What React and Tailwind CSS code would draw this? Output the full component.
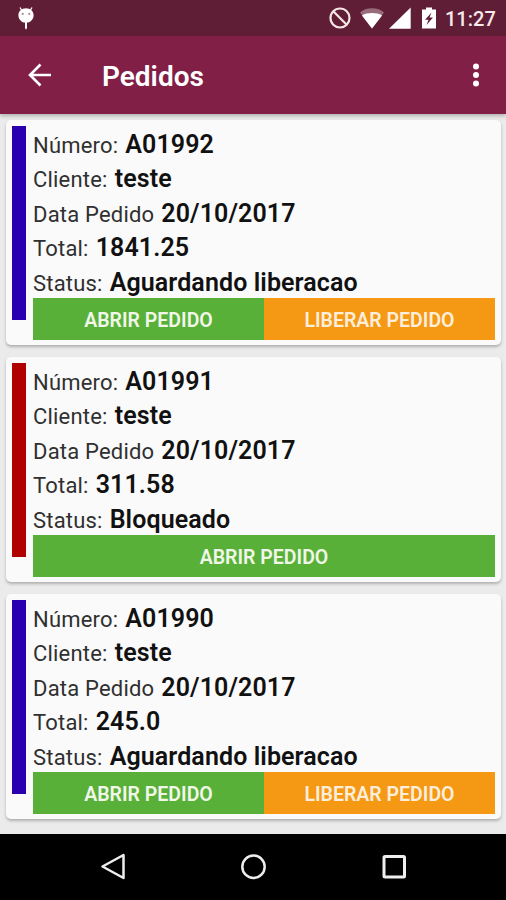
import React from 'react';

const pedidos = [
  { numero: 'A01992', cliente: 'teste', data: '20/10/2017', total: '1841.25', status: 'Aguardando liberacao', liberar: true },
  { numero: 'A01991', cliente: 'teste', data: '20/10/2017', total: '311.58', status: 'Bloqueado', liberar: false },
  { numero: 'A01990', cliente: 'teste', data: '20/10/2017', total: '245.0', status: 'Aguardando liberacao', liberar: true },
];

const StatusBar = () => (
  <div className="flex h-9 shrink-0 items-center bg-[#601e36] text-white">
    {/* Android debug bug */}
    <svg className="ml-[17px] h-6 w-[18px]" viewBox="0 0 18 24">
      <path d="M4.5 4 3 1.5M13.5 4 15 1.5" stroke="#fff" strokeWidth="1.3" />
      <path d="M9 2.200c4.400 0 7.600 3 7.600 7 0 4-3 7.100-6.600 7.400V22L9 23.800 8 22V16.600C4.400 16.300 1.400 13.200 1.400 9.200 1.400 5.200 4.600 2.200 9 2.200z" fill="#fff" />
      <circle cx="5.700" cy="7.900" r="1.100" fill="#a98794" />
      <circle cx="12.300" cy="7.900" r="1.100" fill="#a98794" />
    </svg>
    <div className="ml-auto flex items-center pr-[11px]">
      <svg className="h-6 w-6" viewBox="0 0 24 24" fill="none" stroke="#f5e6e4" strokeWidth="2.200">
        <circle cx="12" cy="12" r="9.500" />
        <path d="M5.300 5.300 18.700 18.700" />
      </svg>
      <svg className="ml-2 h-6 w-6" viewBox="0 0 24 24">
        <path d="M12 22.500 0 6.500C3 3.800 7 2.300 12 2.300S21 3.800 24 6.500z" fill="#986b7b" />
        <path d="M12 22.500 1.900 9.400C4.500 7.900 8 7.100 12 7.100s7.500 .8 10.100 2.300z" fill="#fff" />
      </svg>
      <svg className="ml-[5px] h-6 w-6" viewBox="0 0 24 24">
        <path d="M0 22.700H21.700V1.500z" fill="#fff" />
      </svg>
      <svg className="ml-2 h-6 w-4" viewBox="0 0 16 24">
        <path d="M5 1.500h6v2h4V22.500H1V3.500h4z" fill="#fff" />
        <path d="M10.500 6.500 4 13.800h3.500L5.500 19 12 11.500H8.500z" fill="#601e36" />
      </svg>
      <span className="ml-[8px] w-[50px] pt-[2px] text-[20px] font-medium leading-6 text-[#f7eae9]">11:27</span>
    </div>
  </div>
);

const AppBar = () => (
  <header className="z-10 flex h-[78px] shrink-0 items-center bg-[#811f47] text-white shadow-[0_2px_4px_rgba(0,0,0,0.25)]">
    <button type="button" className="ml-[27px]">
      <svg className="h-6 w-6" viewBox="0 0 24 24" fill="none" stroke="#fff" strokeWidth="2.600">
        <path d="M13.500 1.500 3 12l10.500 10.500M3 12h21" />
      </svg>
    </button>
    <h1 className="ml-[51px] pt-[4px] text-[28px] font-semibold leading-8">Pedidos</h1>
    <button type="button" className="ml-auto mr-[26px]">
      <svg className="h-6 w-2" viewBox="0 0 8 24" fill="#fff">
        <circle cx="4" cy="3.500" r="3" />
        <circle cx="4" cy="12" r="3" />
        <circle cx="4" cy="20.500" r="3" />
      </svg>
    </button>
  </header>
);

const Campo = ({ label, valor }) => (
  <p className="h-[34.4px] whitespace-nowrap text-[22px] leading-[38px] tracking-[0.2px] text-[#303030]">
    {label}
    <span className="ml-[7px] text-[25px] font-semibold tracking-[0.1px] text-[#111]">{valor}</span>
  </p>
);

const Pedido = ({ pedido }) => (
  <article className="flex h-[225px] shrink-0 rounded-[5px] bg-[#fafafa] p-[6px] shadow-[0_2px_3px_rgba(0,0,0,0.25)]">
    <div className={`h-[193.5px] w-[14px] shrink-0 ${pedido.liberar ? 'bg-[#2b00b0]' : 'bg-[#b00000]'}`} />
    <div className="ml-[7px] flex-1">
      <Campo label="Número:" valor={pedido.numero} />
      <Campo label="Cliente:" valor={pedido.cliente} />
      <Campo label="Data Pedido" valor={pedido.data} />
      <Campo label="Total:" valor={pedido.total} />
      <Campo label="Status:" valor={pedido.status} />
      <div className="flex h-[42px] text-[19.5px] font-semibold text-[#f0f7e8]">
        <button type="button" className="flex-1 bg-[#58b039] pt-[4px]">ABRIR PEDIDO</button>
        {pedido.liberar && (
          <button type="button" className="flex-1 bg-[#f59814] pt-[4px] text-[#fdeedb]">LIBERAR PEDIDO</button>
        )}
      </div>
    </div>
  </article>
);

const NavBar = () => (
  <nav className="flex h-[66px] shrink-0 items-center justify-center gap-[112px] bg-black pl-[2px]">
    <svg className="h-7 w-7" viewBox="0 0 28 28" fill="none" stroke="#eee" strokeWidth="2.500" strokeLinejoin="round">
      <path d="M2.500 13.500 23.500 2V25z" />
    </svg>
    <svg className="h-7 w-7" viewBox="0 0 28 28" fill="none" stroke="#eee" strokeWidth="2.500">
      <circle cx="13.500" cy="13.700" r="11.200" />
    </svg>
    <svg className="h-7 w-7" viewBox="0 0 28 28" fill="none" stroke="#eee" strokeWidth="3">
      <rect x="4" y="3.500" width="20.500" height="20.500" rx="1" />
    </svg>
  </nav>
);

export default function App() {
  return (
    <div className="flex h-[900px] w-[506px] flex-col overflow-hidden bg-[#ebebeb] font-[Roboto,sans-serif]">
      <StatusBar />
      <AppBar />
      <main className="flex flex-1 flex-col gap-3 pl-[6px] pr-[5px] pt-[6px]">
        {pedidos.map((pedido) => (
          <Pedido key={pedido.numero} pedido={pedido} />
        ))}
      </main>
      <NavBar />
    </div>
  );
}
